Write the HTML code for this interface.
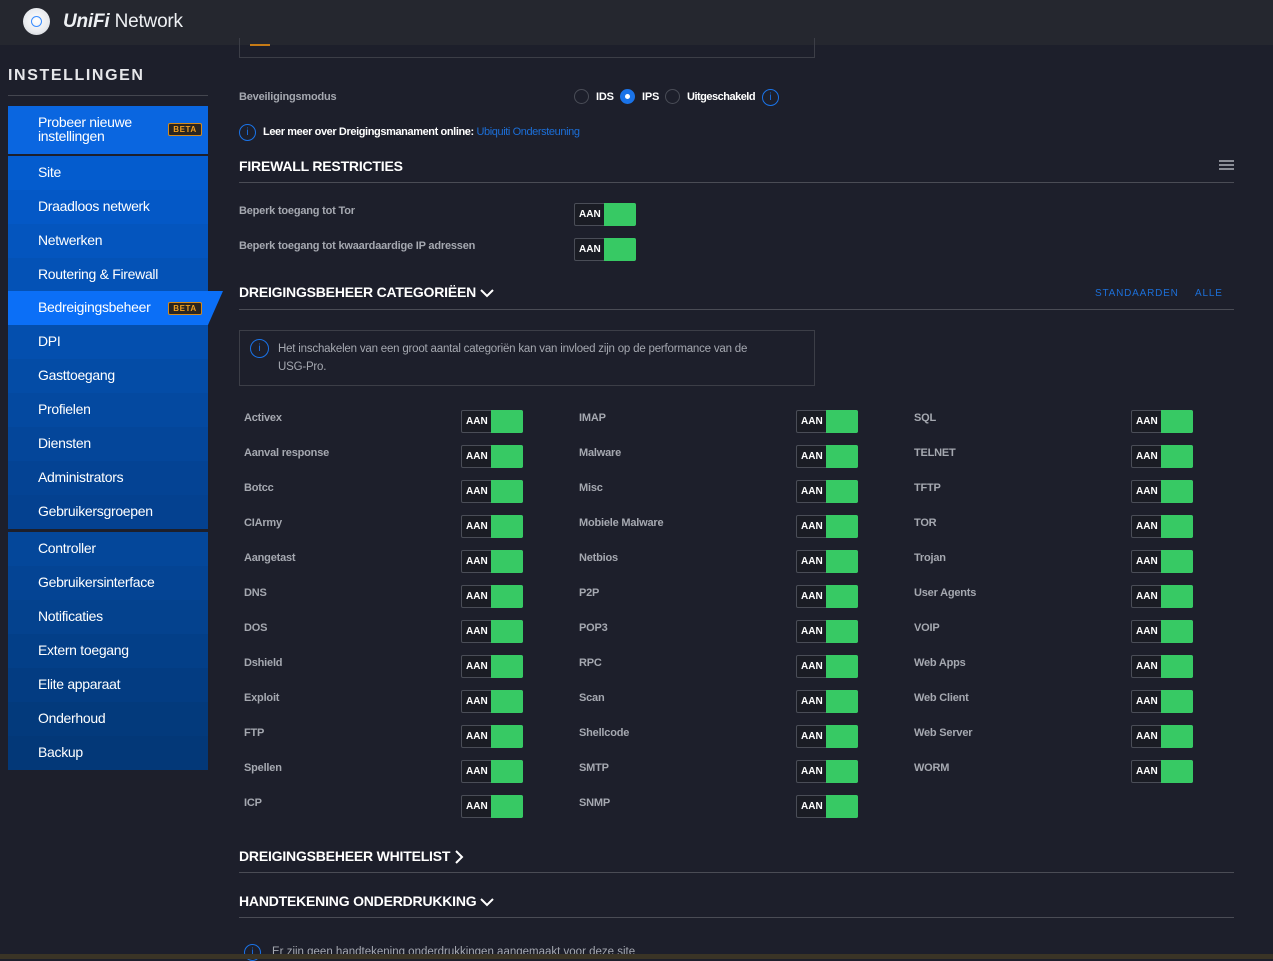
<!DOCTYPE html>
<html><head><meta charset="utf-8"><style>
*{box-sizing:border-box;margin:0;padding:0}
body{width:1273px;height:959px;overflow:hidden;background:#1d1f2b;font-family:"Liberation Sans",sans-serif;color:#c9cbd1;position:relative}
.top{position:absolute;left:0;top:0;width:1273px;height:45px;background:#25272f}
.logo{position:absolute;left:23px;top:8px;width:27px;height:27px;border-radius:50%;background:radial-gradient(circle at 50% 45%,#fff 0,#e8eaee 60%,#bfc3c9 100%)}
.logo:after{content:"";position:absolute;left:8px;top:8px;width:9px;height:9px;border:1.5px solid #3a8dff;border-radius:50%}
.brand{position:absolute;left:63px;top:11px;font-size:19px;color:#eef0f3;letter-spacing:-.2px}
.brand i{font-weight:bold}
.a{position:absolute;white-space:nowrap}
.side-h{left:8px;top:67px;font-size:16px;font-weight:bold;letter-spacing:1.6px;color:#e6e7ea}
.sline{position:absolute;left:8px;top:95px;width:200px;height:1px;background:#44464f}
.it{position:absolute;left:8px;width:200px;height:34px;color:#fff;font-size:14px;padding-left:30px;line-height:32px;letter-spacing:-.3px}
.beta{position:absolute;right:6px;top:11px;width:34px;height:13px;border:1px solid #d58a1a;background:#2a2520;color:#f0a020;font-size:8px;font-weight:bold;line-height:11px;text-align:center;letter-spacing:.6px;border-radius:2px}
.lab{font-size:11px;color:#a5a8b0;font-weight:bold;letter-spacing:-.2px}
.h{font-size:14px;font-weight:bold;color:#fff;letter-spacing:-.2px}
.hr{position:absolute;left:239px;width:995px;height:1px;background:#4a4c55}
.tg{position:absolute;width:62px;height:23px;border:1px solid #4a4d57;border-radius:2px;background:#1a1c24}
.tg span{position:absolute;left:4px;top:5px;font-size:10px;font-weight:bold;color:#fff}
.tg:after{content:"";position:absolute;left:29px;top:-1px;width:32px;height:23px;background:#37c964;border-radius:0 2px 2px 0}
.cl{position:absolute;font-size:11px;color:#a5a8b0;font-weight:bold;letter-spacing:-.2px}
.info{position:absolute;width:17px;height:17px;border:1.3px solid #1a73e8;border-radius:50%;color:#1a73e8;font-size:10px;text-align:center;line-height:15px}
.rad{position:absolute;width:15px;height:15px;border:1px solid #4a4d57;border-radius:50%}
.blue{color:#1c6fd8}
svg.ch{vertical-align:middle;margin-left:4px}
</style></head><body>
<div class="top"><div class="logo"></div><div class="brand"><i>UniFi</i> Network</div></div>
<div class="a side-h">INSTELLINGEN</div><div class="sline"></div>
<div class="it" style="top:106px;height:48px;background:#0a66e0;line-height:14px;padding-top:9px">Probeer nieuwe<br>instellingen<div class="beta" style="top:17px">BETA</div></div>
<div class="it" style="top:156px;background:#045cce">Site</div>
<div class="it" style="top:190px;background:#0458c6">Draadloos netwerk</div>
<div class="it" style="top:224px;background:#0455be">Netwerken</div>
<div class="it" style="top:258px;background:#0452b6">Routering &amp; Firewall</div>
<div class="it" style="top:291px;background:#0b6ff7">Bedreigingsbeheer<div class="beta">BETA</div></div>
<div style="position:absolute;left:208px;top:291px;width:0;height:0;border-left:15px solid #0b6ff7;border-bottom:34px solid transparent"></div>
<div class="it" style="top:325px;background:#044fae">DPI</div>
<div class="it" style="top:359px;background:#044ca6">Gasttoegang</div>
<div class="it" style="top:393px;background:#0449a0">Profielen</div>
<div class="it" style="top:427px;background:#04469a">Diensten</div>
<div class="it" style="top:461px;background:#044394">Administrators</div>
<div class="it" style="top:495px;background:#044190">Gebruikersgroepen</div>
<div class="it" style="top:532px;background:#04479a">Controller</div>
<div class="it" style="top:566px;background:#044494">Gebruikersinterface</div>
<div class="it" style="top:600px;background:#04428e">Notificaties</div>
<div class="it" style="top:634px;background:#033f88">Extern toegang</div>
<div class="it" style="top:668px;background:#033c82">Elite apparaat</div>
<div class="it" style="top:702px;background:#033a7c">Onderhoud</div>
<div class="it" style="top:736px;background:#033878">Backup</div>

<div style="position:absolute;left:239px;top:38px;width:576px;height:20px;border:1px solid #3c3e47;border-top:none"></div>
<div style="position:absolute;left:250px;top:44px;width:20px;height:2px;background:#c57a16"></div>
<div class="a lab" style="left:239px;top:91px">Beveiligingsmodus</div>
<div class="rad" style="left:574px;top:89px"></div><div class="a lab" style="left:596px;top:91px;color:#fff">IDS</div>
<div class="rad" style="left:620px;top:89px;background:#1a73e8;border-color:#1a73e8"><div style="position:absolute;left:4px;top:4px;width:5px;height:5px;background:#fff;border-radius:50%"></div></div><div class="a lab" style="left:642px;top:91px;color:#fff">IPS</div>
<div class="rad" style="left:665px;top:89px"></div><div class="a lab" style="left:687px;top:91px;color:#fff;letter-spacing:-.5px">Uitgeschakeld</div>
<div class="info" style="left:762px;top:89px">i</div>
<div class="info" style="left:239px;top:124px">i</div>
<div class="a lab" style="left:263px;top:126px;color:#fff;letter-spacing:-.4px">Leer meer over Dreigingsmanament online: <span class="blue" style="font-weight:normal">Ubiquiti Ondersteuning</span></div>

<div class="a h" style="left:239px;top:158px">FIREWALL RESTRICTIES</div>
<div style="position:absolute;left:1219px;top:160px;width:15px;height:10px;border-top:2px solid #8a8d96;border-bottom:2px solid #8a8d96"><div style="margin-top:2px;height:2px;background:#8a8d96"></div></div>
<div class="hr" style="top:182px"></div>
<div class="a lab" style="left:239px;top:205px">Beperk toegang tot Tor</div>
<div class="tg" style="left:574px;top:203px"><span>AAN</span></div>
<div class="a lab" style="left:239px;top:240px">Beperk toegang tot kwaardaardige IP adressen</div>
<div class="tg" style="left:574px;top:238px"><span>AAN</span></div>

<div class="a h" style="left:239px;top:284px">DREIGINGSBEHEER CATEGORIËEN<svg class="ch" width="14" height="10" viewBox="0 0 14 10"><path d="M1 2l6 6 6-6" stroke="#fff" stroke-width="2" fill="none"/></svg></div>
<div class="a blue" style="left:1095px;top:288px;font-size:10px;letter-spacing:.8px">STANDAARDEN</div>
<div class="a blue" style="left:1195px;top:288px;font-size:10px;letter-spacing:.8px">ALLE</div>
<div class="hr" style="top:309px"></div>
<div style="position:absolute;left:239px;top:330px;width:576px;height:56px;border:1px solid #3c3e47"></div>
<div class="info" style="left:250px;top:339px;width:19px;height:19px;line-height:17px">i</div>
<div class="a" style="left:278px;top:340px;font-size:11.5px;color:#a5a8b0;line-height:18px;letter-spacing:-.2px">Het inschakelen van een groot aantal categoriën kan van invloed zijn op de performance van de<br>USG-Pro.</div>

<div id="cats"></div>
<script>
var cols=[["Activex","Aanval response","Botcc","CIArmy","Aangetast","DNS","DOS","Dshield","Exploit","FTP","Spellen","ICP"],
["IMAP","Malware","Misc","Mobiele Malware","Netbios","P2P","POP3","RPC","Scan","Shellcode","SMTP","SNMP"],
["SQL","TELNET","TFTP","TOR","Trojan","User Agents","VOIP","Web Apps","Web Client","Web Server","WORM"]];
var h="";cols.forEach(function(c,i){c.forEach(function(n,j){var y=410+35*j;
h+='<div class="cl" style="left:'+(244+335*i)+'px;top:'+(y+2)+'px">'+n+'</div><div class="tg" style="left:'+(461+335*i)+'px;top:'+y+'px"><span>AAN</span></div>';});});
document.getElementById("cats").innerHTML=h;
</script>

<div class="a h" style="left:239px;top:848px">DREIGINGSBEHEER WHITELIST<svg class="ch" width="10" height="14" viewBox="0 0 10 14"><path d="M2 1l6 6-6 6" stroke="#fff" stroke-width="2" fill="none"/></svg></div>
<div class="hr" style="top:872px"></div>
<div class="a h" style="left:239px;top:893px">HANDTEKENING ONDERDRUKKING<svg class="ch" width="14" height="10" viewBox="0 0 14 10"><path d="M1 2l6 6 6-6" stroke="#fff" stroke-width="2" fill="none"/></svg></div>
<div class="hr" style="top:917px"></div>
<div class="info" style="left:244px;top:944px">i</div>
<div class="a" style="left:272px;top:946px;font-size:11.5px;color:#a5a8b0">Er zijn geen handtekening onderdrukkingen aangemaakt voor deze site</div>
<div style="position:absolute;left:0;top:954px;width:1273px;height:5px;background:#3a3426"></div>
</body></html>
